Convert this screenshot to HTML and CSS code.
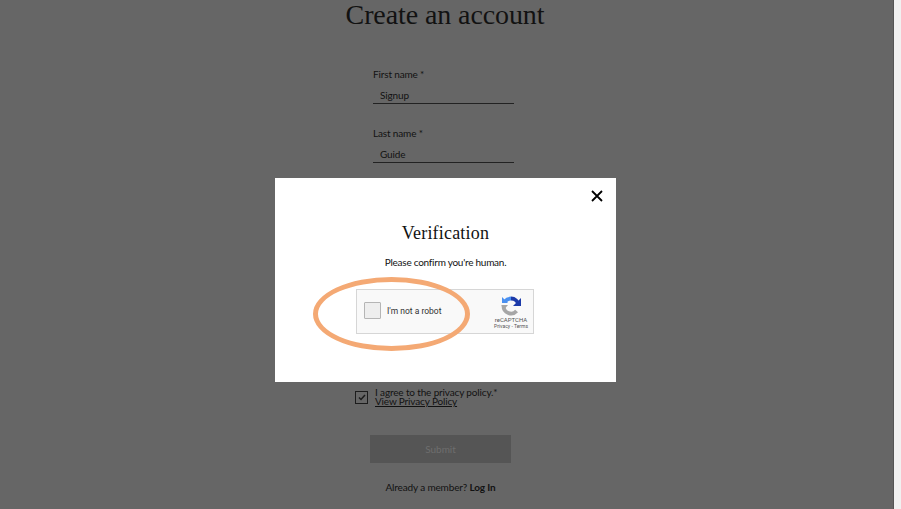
FILE: index.html
```html
<!DOCTYPE html>
<html lang="en">
<head>
    <meta charset="UTF-8">
    <title>Create an account</title>
    <link rel="stylesheet" href="styles.css">
</head>
<body>
    <div class="page">
        <h1>Create an account</h1>
        <form class="signup">
            <div class="field">
                <label>First name *</label>
                <div class="value">Signup</div>
            </div>
            <div class="field">
                <label>Last name *</label>
                <div class="value">Guide</div>
            </div>
            <div class="agree">
                <span class="check">
                    <svg width="8" height="7" viewBox="0 0 8 7"><path d="M1 3.5 L3 5.5 L7 1" fill="none" stroke="#1c1c1c" stroke-width="1.5"/></svg>
                </span>
                <div class="agree-text">
                    <div>I agree to the privacy policy.*</div>
                    <a href="#">View Privacy Policy</a>
                </div>
            </div>
            <button type="button" class="submit">Submit</button>
            <p class="member">Already a member? <b>Log In</b></p>
        </form>
    </div>
    <div class="scrollbar"></div>

    <div class="modal">
        <svg class="close" width="12" height="12" viewBox="0 0 12 12"><path d="M1 1 L11 11 M11 1 L1 11" stroke="#000" stroke-width="1.8"/></svg>
        <h2>Verification</h2>
        <p>Please confirm you're human.</p>
        <div class="captcha">
            <span class="captcha-box"></span>
            <span class="captcha-label">I'm not a robot</span>
            <div class="captcha-brand">
                <svg width="20" height="20" viewBox="0 0 20 20">
                    <path d="M2.5 10 A7.5 7.5 0 0 0 15.6 15" fill="none" stroke="#a6a6a6" stroke-width="3.8"/>
                    <path d="M0 9 H7 L3.5 13 Z" fill="#a6a6a6"/>
                    <path d="M4 5.5 A7.5 7.5 0 0 1 10 2.5" fill="none" stroke="#4a90f0" stroke-width="3.8"/>
                    <path d="M10 2.5 A7.5 7.5 0 0 1 17.5 9" fill="none" stroke="#1c3aa9" stroke-width="3.8"/>
                    <path d="M20 2 V10 H12 Z" fill="#1c3aa9"/>
                    <path d="M1 1 L7 7 H1 Z" fill="#4a90f0"/>
                </svg>
                <div class="brand-name">reCAPTCHA</div>
                <div class="brand-links">Privacy - Terms</div>
            </div>
        </div>
    </div>
    <div class="oval"></div>
</body>
</html>
```

FILE: styles.css
```css
* {
    box-sizing: border-box;
}
html, body {
    margin: 0;
    height: 509px;
    overflow: hidden;
}
body {
    display: flex;
    background-color: #666;
    color: #121212;
    font-family: 'Lato', 'Liberation Sans', sans-serif;
    font-size: 10px;
    letter-spacing: -0.15px;
}
.page {
    flex: 1;
}
.scrollbar {
    width: 8px;
    background-color: #f1f1f1;
    border-left: 1px solid #555;
}
h1 {
    margin: 0;
    padding: 1px 3px 1px 0;
    text-align: center;
    font-family: 'Liberation Serif', serif;
    font-weight: 400;
    font-size: 28px;
    line-height: 28px;
    letter-spacing: -0.1px;
}
.signup {
    width: 141px;
    margin: 37px 0 0 373px;
}
.field {
    margin-bottom: 22px;
}
.field label {
    display: block;
    line-height: 14px;
}
.value {
    height: 23px;
    padding: 7px 0 0 7px;
    line-height: 14px;
    border-bottom: 1px solid #222;
}
.agree {
    display: flex;
    align-items: center;
    gap: 7px;
    margin: 225px 0 0 -18px;
    width: 170px;
}
.check {
    display: flex;
    align-items: center;
    justify-content: center;
    width: 13px;
    height: 13px;
    border: 1px solid #1c1c1c;
}
.agree-text {
    line-height: 9px;
}
.agree-text a {
    color: #121212;
}
.submit {
    display: block;
    width: 141px;
    height: 28px;
    margin: 29px 0 0 -3px;
    border: 0;
    background-color: #555;
    color: #6e6e6e;
    font: inherit;
}
.member {
    margin: 17px 0 0 -3px;
    width: 141px;
    text-align: center;
    white-space: nowrap;
    line-height: 14px;
}
.modal {
    position: absolute;
    left: 275px;
    top: 178px;
    width: 341px;
    height: 204px;
    background-color: #fff;
    text-align: center;
}
.close {
    position: absolute;
    right: 13px;
    top: 12px;
}
.modal h2 {
    margin: 0;
    padding-top: 44px;
    font-family: 'Liberation Serif', serif;
    font-weight: 400;
    font-size: 18px;
    line-height: 22px;
    letter-spacing: 0.2px;
}
.modal p {
    margin: 11px 0 0;
    line-height: 14px;
    letter-spacing: -0.25px;
}
.captcha {
    display: flex;
    align-items: center;
    width: 178px;
    height: 45px;
    margin: 20px 0 0 81px;
    padding: 0 0 0 7px;
    background-color: #f9f9f9;
    border: 1px solid #d6d6d6;
    text-align: left;
}
.captcha-box {
    width: 17px;
    height: 17px;
    margin-bottom: 2px;
    background-color: #eee;
    border: 1px solid #b5b5b5;
    border-radius: 1px;
}
.captcha-label {
    margin: 0 0 2px 6px;
    font-family: 'Roboto', sans-serif;
    font-size: 8.5px;
    letter-spacing: 0;
    color: #333;
}
.captcha-brand {
    margin-left: auto;
    width: 44px;
    padding-top: 3px;
    text-align: center;
    line-height: 7px;
    letter-spacing: 0;
    color: #555;
    font-family: 'Roboto', sans-serif;
    font-size: 6px;
}
.captcha-brand svg {
    display: block;
    margin: 0 auto;
}
.brand-links {
    font-size: 5px;
}
.oval {
    position: absolute;
    left: 313px;
    top: 277px;
    width: 157px;
    height: 74px;
    border: 5px solid #f4a974;
    border-radius: 50%;
}
```
